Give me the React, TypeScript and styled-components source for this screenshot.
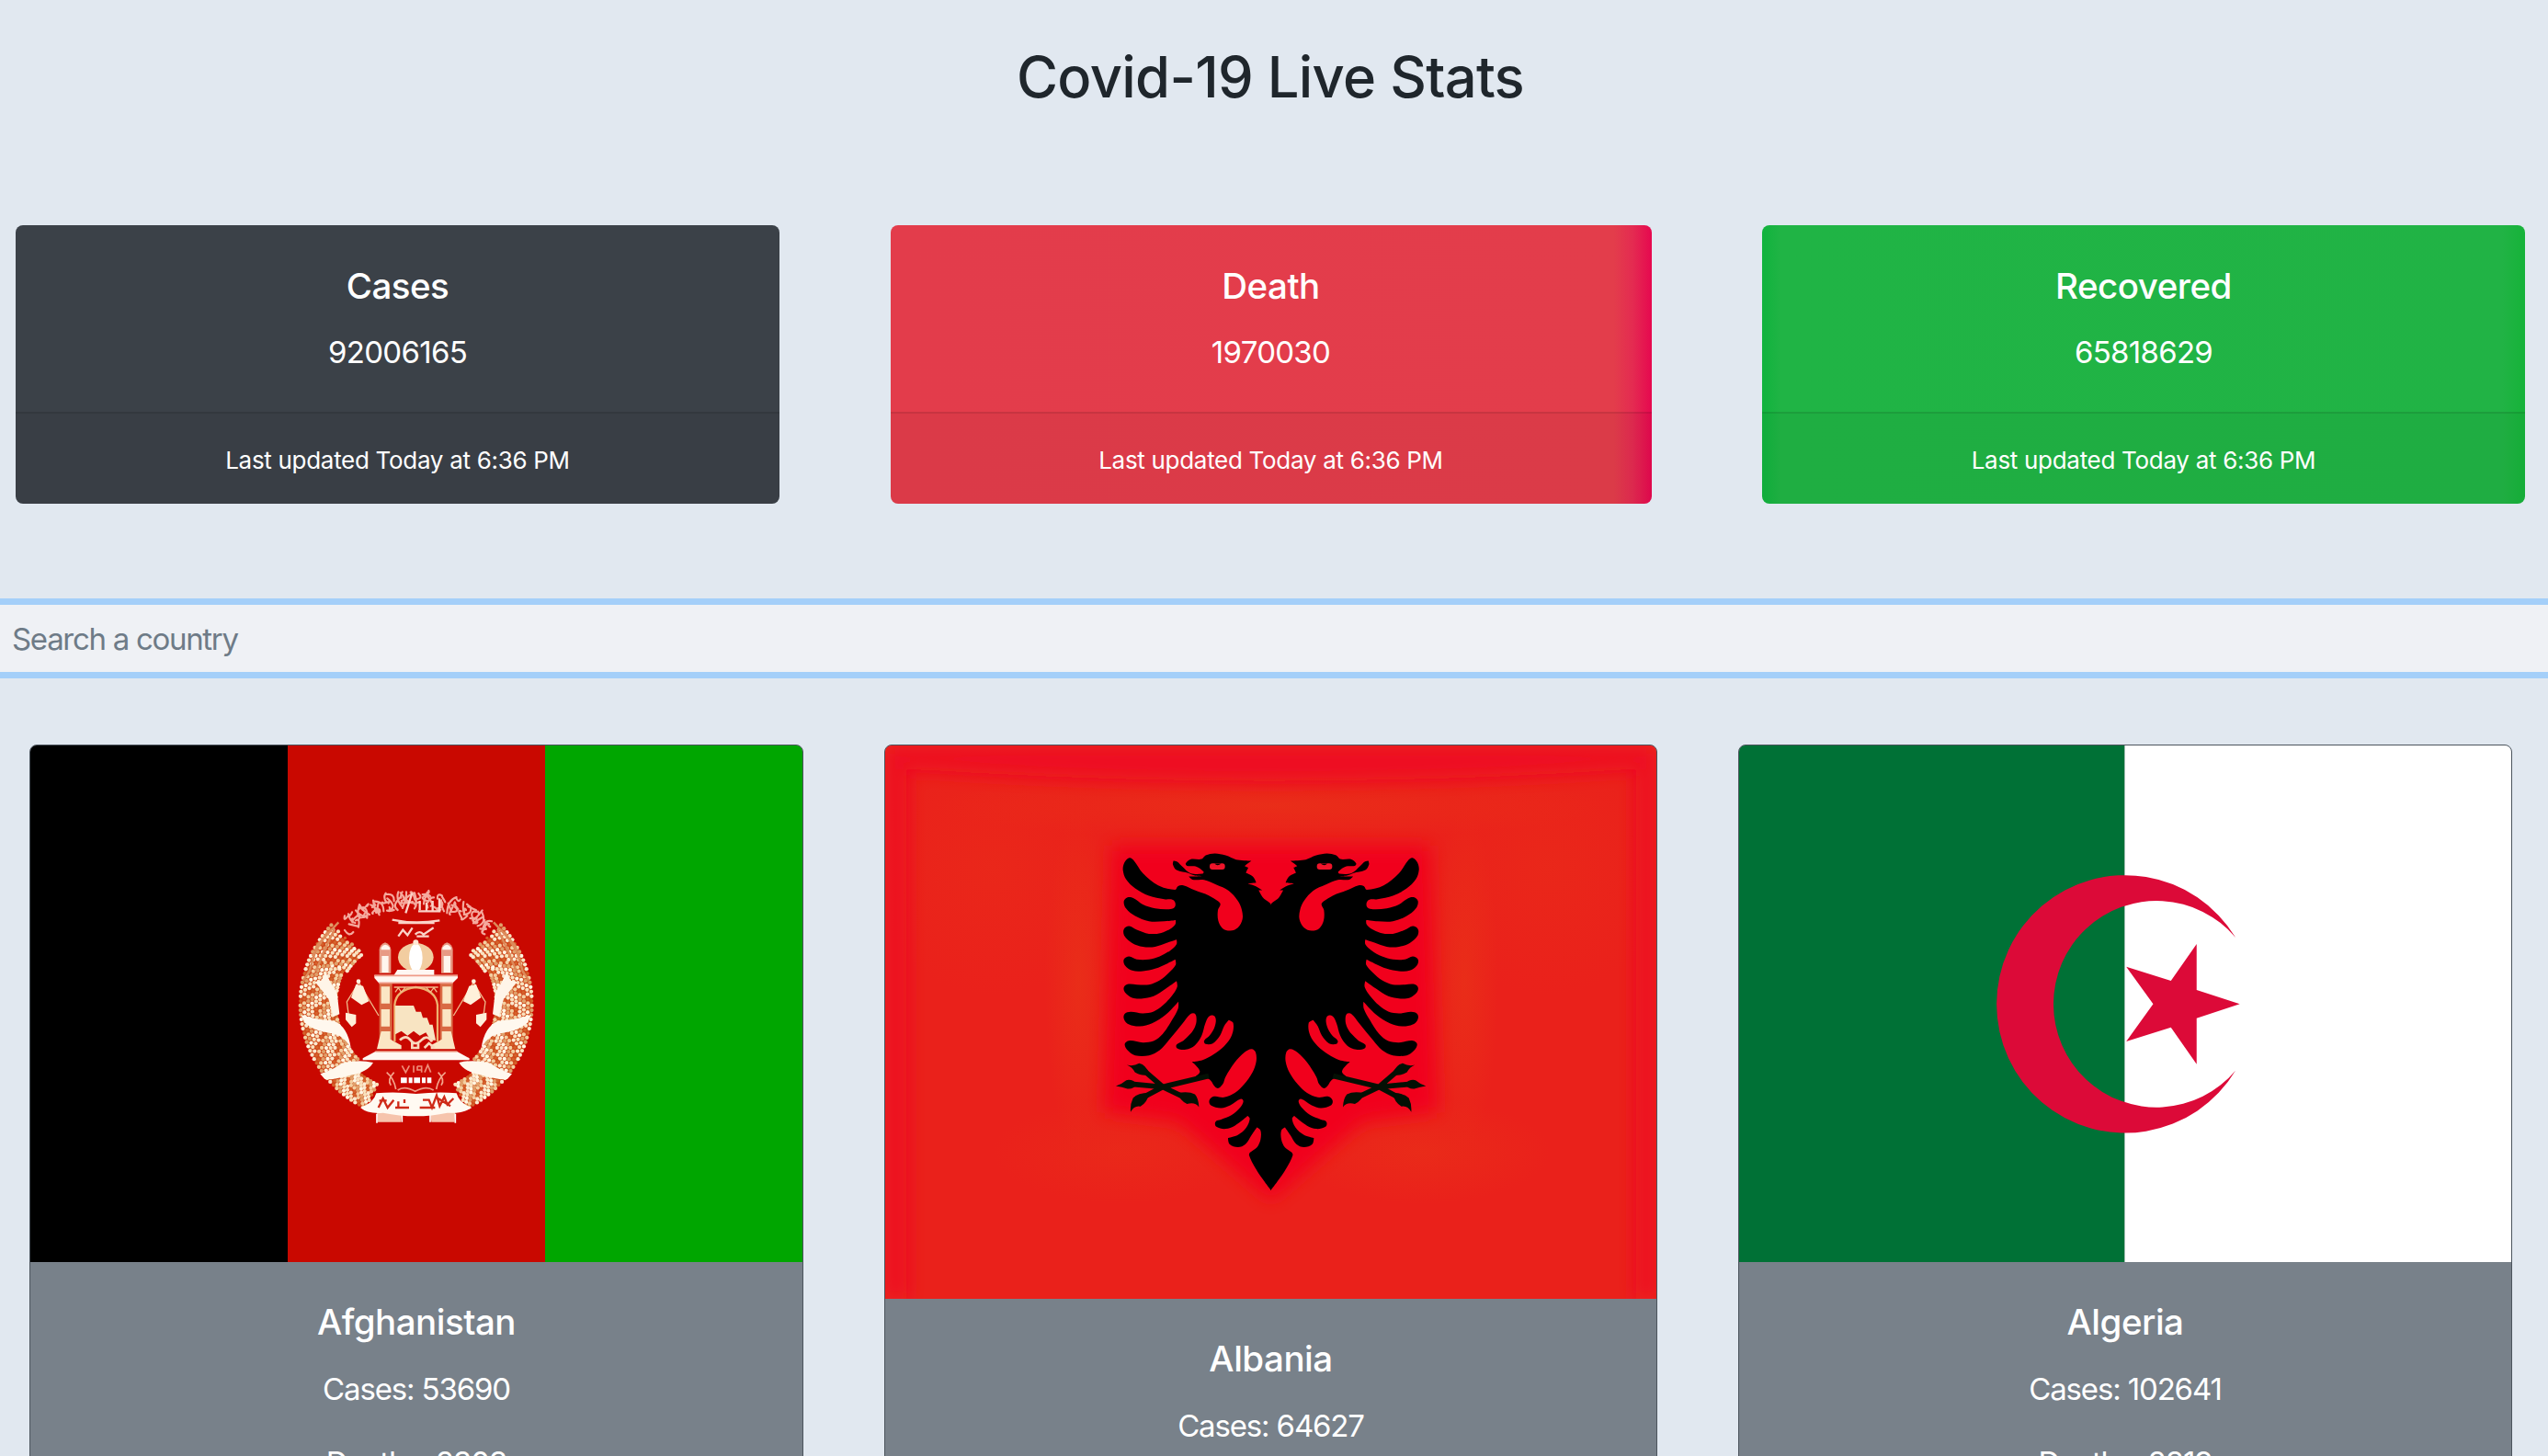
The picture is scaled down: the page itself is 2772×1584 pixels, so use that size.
import React from 'react';
import styled, { createGlobalStyle } from 'styled-components';

type Pt = [number, number];

const GlobalStyle = createGlobalStyle`
  * { box-sizing: border-box; }
  html, body { margin: 0; height: 1584px; overflow: hidden; }
  body {
    background: #e1e8f0;
    font-family: Inter, "Open Sans", sans-serif;
    color: #1f262c;
  }
`;

const Page = styled.main`
  width: 2772px;
  height: 1584px;
  overflow: hidden;
`;

const Heading = styled.h1`
  margin: 0;
  padding: 47px 8px 0 0;
  height: 245px;
  text-align: center;
  font-size: 61.5px;
  line-height: 74px;
  font-weight: 500;
  letter-spacing: -0.7px;
`;

const StatRow = styled.section`
  display: flex;
  justify-content: space-between;
  padding: 0 25px 0 17px;
`;

const StatCard = styled.article<{ $bg: string; $width: number }>`
  width: ${(p) => p.$width}px;
  height: 303px;
  border-radius: 8px;
  background: ${(p) => p.$bg};
  color: #fff;
  text-align: center;
  overflow: hidden;
`;

const StatBody = styled.div`
  height: 203px;
  padding-top: 42px;
`;

const CardTitle = styled.h2`
  margin: 0;
  font-size: 38.5px;
  line-height: 48px;
  font-weight: 500;
  letter-spacing: -0.5px;
`;

const Figure = styled.p<{ $gap: number; $tracking: number }>`
  margin: ${(p) => p.$gap}px 0 0;
  font-size: 33px;
  line-height: 50px;
  letter-spacing: ${(p) => p.$tracking}px;
`;

const StatFooter = styled.footer`
  height: 100px;
  padding-top: 31px;
  border-top: 2px solid rgba(0, 0, 0, 0.09);
  background: rgba(0, 0, 0, 0.03);
  font-size: 26px;
  line-height: 40px;
  letter-spacing: -0.3px;
`;

const Search = styled.input`
  display: block;
  width: 100%;
  height: 87px;
  margin: 103px 0 72px;
  padding: 0 13px;
  border: 0 solid #a4cff9;
  border-width: 7px 0;
  border-radius: 0;
  outline: none;
  background: #eff1f5;
  font: 400 33px Inter, sans-serif;
  letter-spacing: -1.3px;
  &::placeholder { color: #6e7b87; opacity: 1; }
`;

const CountryRow = styled.section`
  display: flex;
  justify-content: space-between;
  align-items: flex-start;
  padding: 0 39px 0 32px;
`;

const CountryCard = styled.article<{ $width: number }>`
  width: ${(p) => p.$width}px;
  height: 900px;
  border: 1px solid #4c545d;
  border-radius: 8px;
  background: #78818a;
  color: #fff;
  text-align: center;
  overflow: hidden;
`;

const FlagBox = styled.div<{ $h: number }>`
  height: ${(p) => p.$h}px;
  margin-bottom: 41px;
  svg { display: block; width: 100%; height: 100%; }
`;

/* Curve through the points; sharp turns stay sharp. */
function curve(pts: Pt[]): string {
  const n = pts.length;
  const tangent = (i: number): Pt => {
    const a = pts[(i - 1 + n) % n], b = pts[i], c = pts[(i + 1) % n];
    const u = [b[0] - a[0], b[1] - a[1]], v = [c[0] - b[0], c[1] - b[1]];
    const cos = (u[0] * v[0] + u[1] * v[1]) / (Math.hypot(u[0], u[1]) * Math.hypot(v[0], v[1]) || 1);
    if (cos < 0.1) return [0, 0];
    const l = Math.hypot(c[0] - a[0], c[1] - a[1]) || 1;
    return [(c[0] - a[0]) / l, (c[1] - a[1]) / l];
  };
  let d = `M${pts[0][0]} ${pts[0][1]}`;
  for (let i = 0; i < n; i++) {
    const p = pts[i], q = pts[(i + 1) % n];
    const s = Math.hypot(q[0] - p[0], q[1] - p[1]) / 3;
    const t = tangent(i), w = tangent((i + 1) % n);
    d += `C${(p[0] + t[0] * s).toFixed(1)} ${(p[1] + t[1] * s).toFixed(1)} ${(q[0] - w[0] * s).toFixed(1)} ${(q[1] - w[1] * s).toFixed(1)} ${q[0]} ${q[1]}`;
  }
  return d + 'Z';
}

const eagleHalf: Pt[] = [
  [549, 257], [522, 230], [508, 206], [520, 206], [497, 192], [472, 184], [500, 181], [490, 162], [466, 149], [474, 132], [462, 127], [484, 110],
  [440, 107], [418, 99], [400, 92], [365, 86], [335, 92], [322, 104], [285, 105], [270, 118], [274, 126], [302, 128],
  [328, 145], [325, 152], [285, 150], [258, 128], [242, 113], [230, 110], [228, 122], [240, 140], [280, 150], [300, 158], [325, 160], [280, 161], [292, 171], [330, 172], [370, 188], [410, 207],
  [440, 240], [453, 270], [455, 300], [440, 328], [415, 338], [390, 330], [376, 305], [375, 270], [383, 252], [376, 242], [345, 223],
  [300, 206], [262, 190], [245, 192], [235, 204], [180, 190], [130, 150], [100, 108], [86, 100], [70, 115], [65, 140], [75, 170],
  [105, 200], [150, 224], [200, 235], [228, 237], [236, 248], [233, 262], [215, 268], [170, 265], [130, 252], [100, 232],
  [80, 229], [68, 242], [75, 265], [105, 290], [150, 307], [200, 307], [237, 303], [236, 317], [220, 332], [190, 345],
  [150, 348], [110, 335], [85, 323], [68, 333], [70, 355], [95, 378], [130, 390], [170, 390], [210, 377], [240, 367],
  [240, 382], [220, 402], [185, 422], [150, 432], [110, 432], [85, 422], [68, 432], [72, 452], [95, 468], [130, 470],
  [170, 462], [210, 445], [236, 432], [237, 450], [215, 475], [185, 500], [150, 514], [110, 514], [80, 513], [68, 523],
  [72, 540], [95, 557], [125, 560], [165, 552], [205, 527], [240, 502], [242, 522], [225, 550], [195, 582], [165, 602],
  [130, 608], [90, 603], [70, 610], [69, 628], [85, 644], [120, 650], [160, 640], [205, 612], [246, 570], [245, 592],
  [225, 630], [195, 675], [165, 698], [130, 703], [85, 697], [71, 708], [80, 728], [105, 745], [150, 745], [185, 728],
  [215, 695], [260, 640], [285, 610], [300, 609], [305, 630], [300, 652], [285, 675], [262, 697], [240, 710], [242, 722],
  [270, 726], [300, 712], [322, 680], [334, 640], [348, 616], [366, 620], [365, 650], [348, 680], [330, 697], [335, 708],
  [358, 706], [382, 680], [395, 650], [410, 630], [425, 640], [420, 680], [395, 715], [360, 742], [325, 760], [290, 766],
  [316, 797], [300, 815], [345, 822], [372, 852], [390, 840], [400, 815], [430, 768], [462, 735], [485, 724], [498, 735], [500, 765],
  [488, 800], [460, 840], [430, 868], [395, 882], [362, 879], [347, 892], [352, 908], [385, 917], [415, 908], [450, 887],
  [458, 895], [448, 915], [420, 940], [385, 955], [367, 962], [370, 978], [400, 985], [430, 975], [472, 943], [479, 952],
  [468, 980], [440, 1005], [408, 1015], [413, 1035], [440, 1045], [465, 1035], [485, 1005], [502, 980], [514, 990],
  [514, 1020], [503, 1045], [477, 1072], [549, 1186],
];
const eaglePath = curve(eagleHalf);

const HalfEagle = () => (
  <>
    <path d={eaglePath} />
    <path d="M345 812L195 848L85 838M195 848L122 785M195 848L120 888M195 848L270 884" fill="none" stroke="#041004" strokeWidth="17" />
    <path d="M42 845Q62 838 76 826Q96 822 110 838Q100 856 80 854Q62 848 42 845ZM78 776Q98 782 118 771Q140 776 152 806Q132 816 104 800Q96 784 78 776ZM90 930Q88 905 98 884Q114 868 150 868Q146 898 122 912Q102 908 90 930ZM313 914Q312 886 300 872Q280 862 244 868Q250 892 274 904Q300 896 313 914Z" fill="#041004" />
    <rect x="348" y="118" width="50" height="20" rx="9" fill="#f0142a" />
    <path d="M364 119Q373 129 386 119Z" />
  </>
);

const AlbaniaFlag = () => (
  <svg viewBox="-711 -267 2517 1807" preserveAspectRatio="none">
    <defs>
      <filter id="halo" x="-30%" y="-30%" width="160%" height="160%"><feGaussianBlur stdDeviation="28" /></filter>
      <radialGradient id="warm">
        <stop offset="0" stopColor="#e93018" stopOpacity="0.8" /><stop offset="1" stopColor="#ea3018" stopOpacity="0" />
      </radialGradient>
    </defs>
    <rect x="-711" y="-267" width="2517" height="1807" fill="#ea211b" />
    <ellipse cx="-360" cy="130" rx="420" ry="420" fill="url(#warm)" opacity="0.5" />
    <ellipse cx="1450" cy="130" rx="400" ry="420" fill="url(#warm)" opacity="0.5" />
    <ellipse cx="548" cy="-70" rx="1100" ry="110" fill="url(#warm)" />
    <ellipse cx="-80" cy="500" rx="110" ry="560" fill="url(#warm)" />
    <ellipse cx="1180" cy="500" rx="110" ry="560" fill="url(#warm)" />
    <ellipse cx="60" cy="1060" rx="420" ry="170" fill="url(#warm)" opacity="0.6" />
    <ellipse cx="1040" cy="1060" rx="420" ry="170" fill="url(#warm)" opacity="0.8" />
    <path d="M-711 -267H1806V1540H1740V-190Q548 -110 -640 -190V1540H-711Z" fill="#ee0820" filter="url(#halo)" />
    <path d="M30 60H1066L1090 930L850 960L548 1220L246 960L6 930Z" fill="#f1041f" filter="url(#halo)" />
    <HalfEagle />
    <g transform="translate(1096 0) scale(-1 1)"><HalfEagle /></g>
  </svg>
);

const AlgeriaFlag = () => (
  <svg viewBox="-774 -357 2523 1686" preserveAspectRatio="none">
    <rect x="-774" y="-357" width="1260" height="1686" fill="#007136" />
    <rect x="486" y="-357" width="1263" height="1686" fill="#fff" />
    <path d="M848 270A420.5 420.5 0 1 0 848 704A337 337 0 1 1 848 270Z" fill="#dc0a38" />
    <path d="M862 487L721 533V683L637 563L491 609L579 487L491 365L637 411L721 291V441Z" fill="#dc0a38" />
  </svg>
);

const CX = 458;
const CY = 457;
const polar = (r: number, deg: number): Pt => [
  CX + r * Math.cos((deg * Math.PI) / 180),
  CY + r * Math.sin((deg * Math.PI) / 180),
];

/* Grains of one wheat sheaf, ring by ring. */
const innerRadius = (a: number) => (a > 205 ? 250 - (a - 205) * 0.6 : a < 135 ? 292 : 262);
const grains: { x: number; y: number; c: string; r: number }[] = [];
for (let ring = 0; ring < 10; ring++) {
  for (let a = 116; a < 223; a += 2.3) {
    const inner = innerRadius(a);
    const r = inner + ring * ((378 - inner) / 9);
    const [x, y] = polar(r, a + (ring % 2) * 1.15);
    const k = (ring * 7 + Math.round(a * 3)) % 6;
    grains.push({ x, y, c: ['#f9e2be', '#fff6e2', '#e0a06a', '#f3cfa0', '#d4632c', '#fbe9cf'][k], r: k === 4 ? 5 : 6.4 });
  }
}
const ringBase = (() => {
  const out: string[] = [];
  for (let a = 116; a <= 222; a += 2) out.push(polar(380, a).map((v) => v.toFixed(0)).join(' '));
  for (let a = 222; a >= 116; a -= 2) out.push(polar(innerRadius(a) - 4, a).map((v) => v.toFixed(0)).join(' '));
  return `M${out.join('L')}Z`;
})();

const Sheaf = () => (
  <>
    <path d={ringBase} fill="#cf4a1c" />
    {grains.map((g, i) => <circle key={i} cx={g.x} cy={g.y} r={g.r} fill={g.c} />)}
    <path d="M205 190L135 265L110 350L90 380M192 212L150 300M180 235L130 350M170 220L120 300" stroke="#dd8a5a" strokeWidth="7" fill="none" />
    <path d="M128 385L150 380L162 352L178 385L200 420L208 490L188 498L172 440L145 405Z" fill="#fff5e8" />
    <path d="M82 492Q130 508 190 512Q235 530 245 600Q220 556 178 552Q125 545 96 520Z" fill="#fff8ee" />
    <path d="M145 685Q190 670 215 650Q270 636 318 648Q300 680 240 690Q190 705 160 702Z" fill="#fff8ee" />
    <path d="M270 385L336 495M272 385L232 450L240 510" stroke="#efb98a" strokeWidth="4" fill="none" />
    <path d="M262 392L285 398L304 448L280 460L246 436ZM228 485L262 492L262 520L248 532L228 508Z" fill="#fff0da" />
    <circle cx="270" cy="383" r="7" fill="#fff3df" />
    <path d="M338 280Q340 262 357 256Q374 262 376 280V356H338Z" fill="#e89a84" />
    <path d="M346 300H368V354H346ZM344 272Q357 254 372 272V280H344Z" fill="#fff6ee" />
    <path d="M338 388H380V600H338Z" fill="#d96a44" />
    <path d="M344 400H372V455H344ZM344 474H372V530H344ZM344 546H374V572L410 592V604H330Z" fill="#fbe6c4" />
    <path d="M362 680Q386 700 392 735M386 680Q362 705 376 722" stroke="#f4a58c" strokeWidth="5" fill="none" />
    <path d="M330 810H412L408 842H332Z" fill="#f6c4ac" />
    <path d="M330 815V845M412 815V842" stroke="#fff" strokeWidth="5" />
  </>
);

/* Interlaced strokes of the inscription along the upper arc. */
const script: string[] = [];
for (let i = 0; i < 84; i++) {
  const a = 229 + i * 1.03;
  const r1 = 312 + ((i * 29) % 60), r2 = 312 + ((i * 47 + 23) % 64);
  const p = polar(r1, a), q = polar(r2, a + ((i * 13) % 7) - 3), m = polar((r1 + r2) / 2 + ((i * 17) % 30) - 15, a + ((i * 5) % 9) - 4);
  script.push(`M${p[0].toFixed(0)} ${p[1].toFixed(0)}Q${m[0].toFixed(0)} ${m[1].toFixed(0)} ${q[0].toFixed(0)} ${q[1].toFixed(0)}`);
}

const AfghanistanFlag = () => (
  <svg viewBox="-801 -387 2520 1686" preserveAspectRatio="none">
    <rect x="-801" y="-387" width="840" height="1686" fill="#000" />
    <rect x="39" y="-387" width="840" height="1686" fill="#c90800" />
    <rect x="879" y="-387" width="840" height="1686" fill="#00a600" />
    <path d={script.join('')} stroke="#f5a99d" strokeWidth="6.5" fill="none" strokeLinecap="round" />
    <path d="M380 182Q455 198 535 184M400 192H518M400 236L415 215L430 232L446 208M455 230Q470 215 482 230L515 208M460 236H500M424 160L445 95M470 150V120M492 154V125M512 154V120M534 152V112M465 154H538" stroke="#fbd3c8" strokeWidth="7" fill="none" />
    <Sheaf />
    <g transform="translate(916 0) scale(-1 1)"><Sheaf /></g>
    <ellipse cx="457" cy="304" rx="58" ry="46" fill="#f2cda0" />
    <ellipse cx="457" cy="306" rx="22" ry="46" fill="#fff" />
    <circle cx="457" cy="256" r="9" fill="#ffe8d4" />
    <path d="M397 345H517V362H594V372L578 388H336L322 372V362H386Z" fill="#fff7f2" />
    <path d="M322 364H594M336 388H578" stroke="#ef9b88" strokeWidth="5" />
    <path d="M388 580V460Q392 410 457 402Q522 410 528 460V580" fill="none" stroke="#eeb06f" strokeWidth="7" />
    <path d="M386 402H530M390 418L400 404L410 418L422 404M492 404L505 418L516 404L526 418" stroke="#f2b98a" strokeWidth="4" fill="none" />
    <path d="M390 556V462H450L458 482H474L480 502H494L502 524H512L522 575H505L490 550L470 560L450 545L430 560L410 545Z" fill="#f8e4c2" />
    <path d="M405 575Q425 555 440 575T475 575T510 580M445 600V585H465V600ZM485 600L500 585L518 600" stroke="#f9d8be" strokeWidth="8" fill="none" />
    <path d="M325 612H592L632 634V640H284V634Z" fill="#fff7f2" />
    <path d="M325 612H592" stroke="#eda48f" strokeWidth="4" />
    <path d="M412 658L424 680L436 658M450 658V680M462 660H476V680M462 660V672H476M486 680L496 656L506 680" stroke="#ef8d78" strokeWidth="5" fill="none" />
    <path d="M408 706H508" stroke="#fff" strokeWidth="18" strokeDasharray="20 6 12 5" />
    <path d="M398 738Q420 722 455 742Q490 722 515 738" stroke="#ee9a86" strokeWidth="5" fill="none" />
    <path d="M276 795Q320 780 328 748Q390 742 458 750Q530 742 590 748Q600 782 640 795Q610 815 560 812Q458 834 350 812Q300 816 276 795Z" fill="#fffaf2" />
    <path d="M335 795L350 765L365 795L385 770M338 772H362M390 795H435M400 775V795M420 768V780M470 795H520M480 770H500L510 795L525 755L535 790L550 760L560 785L580 765M530 765L570 790" stroke="#cf2a18" strokeWidth="7" fill="none" />
  </svg>
);

const stats = [
  { title: 'Cases', value: '92006165', width: 831, bg: '#3b4148' },
  { title: 'Death', value: '1970030', width: 828, bg: 'linear-gradient(90deg, #e33c4b 0, #e33d4b 95%, #e42b51 97.5%, #e6084f 100%)' },
  { title: 'Recovered', value: '65818629', width: 830, bg: 'linear-gradient(90deg, #10b33d 0, #20b445 2.5%, #21b345 97%, #16b339 100%)' },
];

const countries = [
  { name: 'Afghanistan', cases: 53690, deaths: 2303, width: 842, flagHeight: 562, Flag: AfghanistanFlag },
  { name: 'Albania', cases: 64627, deaths: 1252, width: 841, flagHeight: 602, Flag: AlbaniaFlag },
  { name: 'Algeria', cases: 102641, deaths: 2819, width: 842, flagHeight: 562, Flag: AlgeriaFlag },
];

export default function App() {
  return (
    <Page>
      <GlobalStyle />
      <Heading>Covid-19 Live Stats</Heading>
      <StatRow>
        {stats.map((s) => (
          <StatCard key={s.title} $bg={s.bg} $width={s.width}>
            <StatBody>
              <CardTitle>{s.title}</CardTitle>
              <Figure $gap={23} $tracking={-0.7}>{s.value}</Figure>
            </StatBody>
            <StatFooter>Last updated Today at 6:36 PM</StatFooter>
          </StatCard>
        ))}
      </StatRow>
      <Search placeholder="Search a country" />
      <CountryRow>
        {countries.map(({ name, cases, deaths, width, flagHeight, Flag }) => (
          <CountryCard key={name} $width={width}>
            <FlagBox $h={flagHeight}><Flag /></FlagBox>
            <CardTitle>{name}</CardTitle>
            <Figure $gap={23.5} $tracking={-1.15}>Cases: {cases}</Figure>
            <Figure $gap={30.5} $tracking={-1.15}>Deaths: {deaths}</Figure>
          </CountryCard>
        ))}
      </CountryRow>
    </Page>
  );
}
